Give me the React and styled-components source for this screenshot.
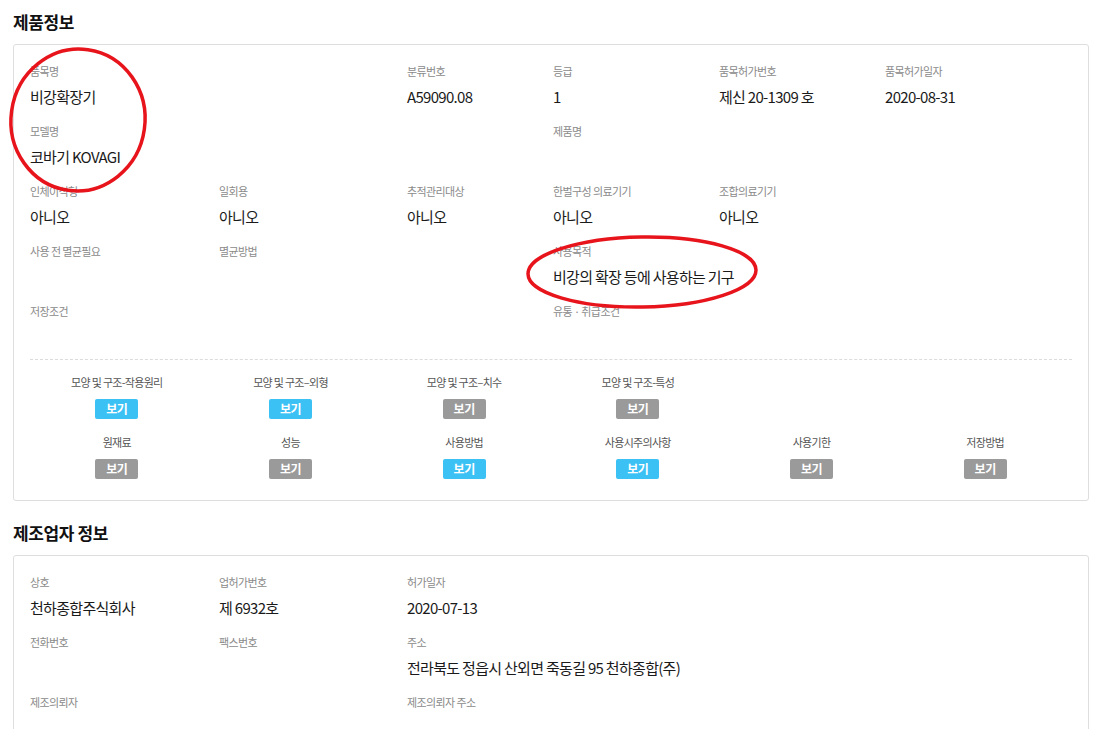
import React from "react";
import styled, { createGlobalStyle } from "styled-components";

const GlobalStyle = createGlobalStyle`
  html, body {
    margin: 0;
    padding: 0;
    background: #ffffff;
  }
  body {
    font-family: "Noto Sans CJK KR", "Noto Sans", sans-serif;
    color: #222;
  }
`;

const Page = styled.div`
  position: relative;
  width: 1100px;
  box-sizing: border-box;
  padding: 10px 11px 0 13px;
`;

const SectionTitle = styled.h2`
  margin: ${(p) => (p.$first ? "0" : "20px")} 0 10px 0;
  font-size: 17px;
  line-height: 24px;
  font-weight: 700;
  letter-spacing: -0.4px;
  color: #111;
`;

const Card = styled.div`
  border: 1px solid #dedede;
  border-radius: 3px;
  padding: 18px 16px ${(p) => p.$pb || "21px"} 16px;
  background: #fff;
`;

const FieldGrid = styled.div`
  display: grid;
  grid-template-columns: 189px 188px 146px 166px 166px 1fr;
  grid-auto-rows: 44px;
  row-gap: 16px;
`;

const Field = styled.div`
  grid-column: ${(p) => p.$col} / span ${(p) => p.$span || 1};
  grid-row: ${(p) => p.$row};
  display: flex;
  flex-direction: column;
  min-width: 0;
`;

const Label = styled.div`
  font-size: 11px;
  line-height: 16px;
  color: #8a8a8a;
  letter-spacing: -0.6px;
  white-space: nowrap;
`;

const Value = styled.div`
  margin-top: 8px;
  font-size: 15px;
  line-height: 20px;
  min-height: 20px;
  color: #1a1a1a;
  letter-spacing: -0.7px;
  white-space: nowrap;
`;

const Divider = styled.div`
  margin-top: 12px;
  border-top: 1px dashed #dcdcdc;
`;

const DocGrid = styled.div`
  margin-top: 14px;
  display: grid;
  grid-template-columns: repeat(6, 1fr);
  row-gap: 15px;
`;

const DocItem = styled.div`
  display: flex;
  flex-direction: column;
  align-items: center;
  gap: 9px;
`;

const DocLabel = styled.div`
  font-size: 11px;
  line-height: 16px;
  color: #555;
  letter-spacing: -0.7px;
  white-space: nowrap;
`;

const ViewButton = styled.button`
  width: 43px;
  height: 20px;
  padding: 0;
  border: none;
  border-radius: 2px;
  background: ${(p) => (p.$active ? "#3cc1f5" : "#9a9a9a")};
  color: #fff;
  font-family: "Noto Sans CJK KR", "Noto Sans", sans-serif;
  font-size: 12px;
  font-weight: 700;
  line-height: 20px;
  letter-spacing: -0.5px;
  cursor: pointer;
`;

const Overlay = styled.svg`
  position: absolute;
  left: 0;
  top: 0;
  width: 1100px;
  height: 729px;
  pointer-events: none;
`;

const productFields = [
  { label: "품목명", value: "비강확장기", col: 1, row: 1 },
  { label: "분류번호", value: "A59090.08", col: 3, row: 1 },
  { label: "등급", value: "1", col: 4, row: 1 },
  { label: "품목허가번호", value: "제신 20-1309 호", col: 5, row: 1 },
  { label: "품목허가일자", value: "2020-08-31", col: 6, row: 1 },
  { label: "모델명", value: "코바기 KOVAGI", col: 1, row: 2, span: 2 },
  { label: "제품명", value: "", col: 4, row: 2 },
  { label: "인체이식형", value: "아니오", col: 1, row: 3 },
  { label: "일회용", value: "아니오", col: 2, row: 3 },
  { label: "추적관리대상", value: "아니오", col: 3, row: 3 },
  { label: "한벌구성 의료기기", value: "아니오", col: 4, row: 3 },
  { label: "조합의료기기", value: "아니오", col: 5, row: 3 },
  { label: "사용 전 멸균필요", value: "", col: 1, row: 4 },
  { label: "멸균방법", value: "", col: 2, row: 4 },
  { label: "사용목적", value: "비강의 확장 등에 사용하는 기구", col: 4, row: 4, span: 3 },
  { label: "저장조건", value: "", col: 1, row: 5 },
  { label: "유통 · 취급조건", value: "", col: 4, row: 5 },
];

const docs = [
  { label: "모양 및 구조-작용원리", active: true },
  { label: "모양 및 구조–외형", active: true },
  { label: "모양 및 구조–치수", active: false },
  { label: "모양 및 구조-특성", active: false },
  null,
  null,
  { label: "원재료", active: false },
  { label: "성능", active: false },
  { label: "사용방법", active: true },
  { label: "사용시주의사항", active: true },
  { label: "사용기한", active: false },
  { label: "저장방법", active: false },
];

const makerFields = [
  { label: "상호", value: "천하종합주식회사", col: 1, row: 1 },
  { label: "업허가번호", value: "제 6932호", col: 2, row: 1 },
  { label: "허가일자", value: "2020-07-13", col: 3, row: 1 },
  { label: "전화번호", value: "", col: 1, row: 2 },
  { label: "팩스번호", value: "", col: 2, row: 2 },
  { label: "주소", value: "전라북도 정읍시 산외면 죽동길 95 천하종합(주)", col: 3, row: 2, span: 4 },
  { label: "제조의뢰자", value: "", col: 1, row: 3 },
  { label: "제조의뢰자 주소", value: "", col: 3, row: 3, span: 3 },
];

function Fields({ items }) {
  return (
    <FieldGrid>
      {items.map((f) => (
        <Field key={f.label} $col={f.col} $row={f.row} $span={f.span}>
          <Label>{f.label}</Label>
          <Value>{f.value}</Value>
        </Field>
      ))}
    </FieldGrid>
  );
}

export default function App() {
  return (
    <Page>
      <GlobalStyle />
      <SectionTitle $first>제품정보</SectionTitle>
      <Card>
        <Fields items={productFields} />
        <Divider />
        <DocGrid>
          {docs.map((d, i) =>
            d ? (
              <DocItem key={i}>
                <DocLabel>{d.label}</DocLabel>
                <ViewButton $active={d.active}>보기</ViewButton>
              </DocItem>
            ) : (
              <div key={i} />
            )
          )}
        </DocGrid>
      </Card>

      <SectionTitle>제조업자 정보</SectionTitle>
      <Card $pb="10px">
        <Fields items={makerFields} />
      </Card>

      <Overlay viewBox="0 0 1100 729">
        <ellipse
          cx="78"
          cy="120"
          rx="67"
          ry="71"
          transform="rotate(8 78 120)"
          fill="none"
          stroke="#e8141c"
          strokeWidth="3.5"
        />
        <ellipse
          cx="642"
          cy="272"
          rx="114"
          ry="35"
          transform="rotate(-1 642 272)"
          fill="none"
          stroke="#e8141c"
          strokeWidth="3.5"
        />
      </Overlay>
    </Page>
  );
}
